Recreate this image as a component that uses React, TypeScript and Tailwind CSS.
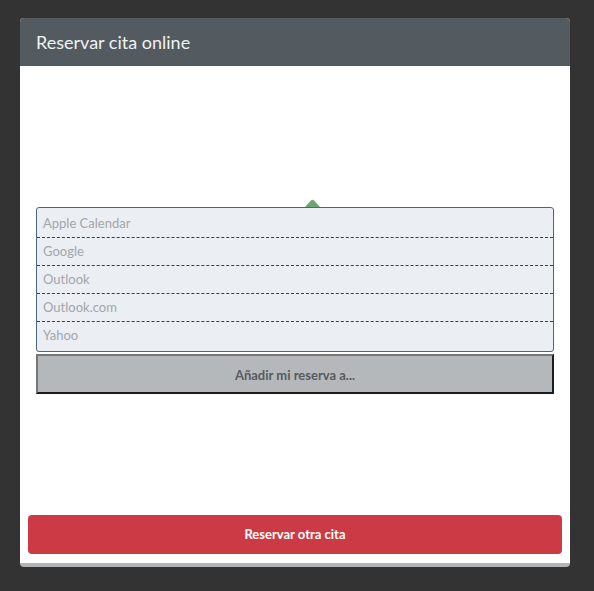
import React from 'react'

const CALENDARS = ['Apple Calendar', 'Google', 'Outlook', 'Outlook.com', 'Yahoo']

export default function App() {
  return (
    <div className="min-h-[591px] bg-[#333333] pt-[18px] pl-[20px]" style={{ fontFamily: 'Lato, "Open Sans", sans-serif' }}>
      <div className="w-[550px] rounded-[4px] overflow-hidden border-b-4 border-[#b2b5b8] bg-white">
        <div className="h-[48px] bg-[#535b61] px-4 flex items-center text-[18px] text-[#f0f2f2]">
          Reservar cita online
        </div>

        <div className="h-[497px] flex flex-col">
          <div className="px-4 pt-[133px]">
            <div className="ml-[269px] h-[8px] flex items-end">
              <svg width="15" height="8" viewBox="0 0 15 8">
                <path d="M0 8 L6 1.5 Q7.5 0 9 1.5 L15 8 Z" fill="#6fa56f" />
              </svg>
            </div>
            <div className="border border-[#4a6580] rounded-[3px] bg-[#ebeef3] py-[2px]">
              {CALENDARS.map((c, i) => (
                <div key={c}
                  className={`flex items-center pl-[6px] text-[13px] text-[#a2a6aa] ${
                    i < CALENDARS.length - 1 ? 'h-[28px] border-b border-dashed border-[#3a3f44]' : 'h-[27px]'
                  }`}>
                  {c}
                </div>
              ))}
            </div>
            <button type="button"
              className="mt-[2px] w-full h-[40px] pt-[4px] bg-[#b5b8ba] border-2 border-t-[#767676] border-l-[#767676] border-b-[#1c1c1c] border-r-[#1c1c1c] text-[13px] font-bold text-[#555b60]">
              Añadir mi reserva a...
            </button>
          </div>

          <div className="flex-1" />

          <button type="button"
            className="mx-2 mb-[9px] h-[39px] rounded-[4px] bg-[#cc3b45] text-white text-[13px] font-bold">
            Reservar otra cita
          </button>
        </div>
      </div>
    </div>
  )
}
